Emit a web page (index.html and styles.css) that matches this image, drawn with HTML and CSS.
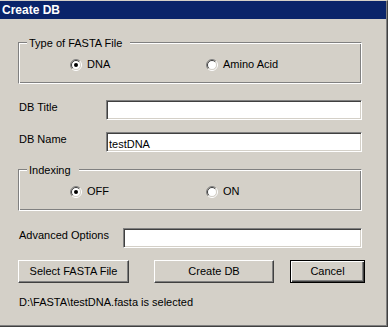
FILE: index.html
```html
<!DOCTYPE html>
<html lang="en">

<head>
    <meta charset="UTF-8">
    <title>Create DB</title>
    <link rel="stylesheet" href="styles.css">
</head>

<body>
    <div class="window">
        <div class="titlebar">Create DB</div>
        <div class="content">
            <!-- FASTA type -->
            <div class="group">
                <span class="legend">Type of FASTA File</span>
                <div class="options">
                    <label class="option">
                        <svg class="radio" width="12" height="12" viewBox="0 0 12 12">
                            <circle cx="6" cy="6" r="4.5" fill="#fff"/>
                            <path d="M2.1 9.9A5.5 5.5 0 0 1 9.9 2.1" stroke="#808080" fill="none"/>
                            <path d="M2.8 9.2A4.5 4.5 0 0 1 9.2 2.8" stroke="#404040" fill="none"/>
                            <path d="M9.9 2.1A5.5 5.5 0 0 1 2.1 9.9" stroke="#fff" fill="none"/>
                            <path d="M9.2 2.8A4.5 4.5 0 0 1 2.8 9.2" stroke="#d4d0c8" fill="none"/>
                            <circle cx="6" cy="6" r="2" fill="#000"/>
                        </svg>DNA
                    </label>
                    <label class="option">
                        <svg class="radio" width="12" height="12" viewBox="0 0 12 12">
                            <circle cx="6" cy="6" r="4.5" fill="#fff"/>
                            <path d="M2.1 9.9A5.5 5.5 0 0 1 9.9 2.1" stroke="#808080" fill="none"/>
                            <path d="M2.8 9.2A4.5 4.5 0 0 1 9.2 2.8" stroke="#404040" fill="none"/>
                            <path d="M9.9 2.1A5.5 5.5 0 0 1 2.1 9.9" stroke="#fff" fill="none"/>
                            <path d="M9.2 2.8A4.5 4.5 0 0 1 2.8 9.2" stroke="#d4d0c8" fill="none"/>
                        </svg>Amino Acid
                    </label>
                </div>
            </div>

            <div class="field field-first">
                <span class="field-label">DB Title</span>
                <div class="edit"></div>
            </div>

            <div class="field">
                <span class="field-label">DB Name</span>
                <div class="edit">testDNA</div>
            </div>

            <!-- Indexing -->
            <div class="group group-indexing">
                <span class="legend">Indexing</span>
                <div class="options">
                    <label class="option">
                        <svg class="radio" width="12" height="12" viewBox="0 0 12 12">
                            <circle cx="6" cy="6" r="4.5" fill="#fff"/>
                            <path d="M2.1 9.9A5.5 5.5 0 0 1 9.9 2.1" stroke="#808080" fill="none"/>
                            <path d="M2.8 9.2A4.5 4.5 0 0 1 9.2 2.8" stroke="#404040" fill="none"/>
                            <path d="M9.9 2.1A5.5 5.5 0 0 1 2.1 9.9" stroke="#fff" fill="none"/>
                            <path d="M9.2 2.8A4.5 4.5 0 0 1 2.8 9.2" stroke="#d4d0c8" fill="none"/>
                            <circle cx="6" cy="6" r="2" fill="#000"/>
                        </svg>OFF
                    </label>
                    <label class="option">
                        <svg class="radio" width="12" height="12" viewBox="0 0 12 12">
                            <circle cx="6" cy="6" r="4.5" fill="#fff"/>
                            <path d="M2.1 9.9A5.5 5.5 0 0 1 9.9 2.1" stroke="#808080" fill="none"/>
                            <path d="M2.8 9.2A4.5 4.5 0 0 1 9.2 2.8" stroke="#404040" fill="none"/>
                            <path d="M9.9 2.1A5.5 5.5 0 0 1 2.1 9.9" stroke="#fff" fill="none"/>
                            <path d="M9.2 2.8A4.5 4.5 0 0 1 2.8 9.2" stroke="#d4d0c8" fill="none"/>
                        </svg>ON
                    </label>
                </div>
            </div>

            <div class="field field-advanced">
                <span class="field-label">Advanced Options</span>
                <div class="edit"></div>
            </div>

            <div class="buttons">
                <button class="btn btn-select">Select FASTA File</button>
                <button class="btn btn-create">Create DB</button>
                <button class="btn btn-cancel btn-default">Cancel</button>
            </div>

            <div class="status">D:\FASTA\testDNA.fasta is selected</div>
        </div>
    </div>
</body>

</html>
```

FILE: styles.css
```css
body {
    margin: 0;
    background: #ffffff;
    font-family: "Liberation Sans", Arial, sans-serif;
    font-size: 11px;
    color: #000;
}

.window {
    width: 388px;
    height: 327px;
    box-sizing: border-box;
    background: #d4d0c8;
    border-top: 1px solid #d4d0c8;
    border-right: 1px solid #404040;
    border-bottom: 1px solid #404040;
    box-shadow: inset -1px -1px 0 #808080;
}

.titlebar {
    height: 18px;
    margin-right: 1px;
    padding-left: 2px;
    background: #0a246a;
    color: #fff;
    font-size: 12px;
    font-weight: bold;
    line-height: 18px;
}

.content {
    padding: 23px 25px 0 18px;
}

/* etched group box */
.group {
    position: relative;
    height: 42px;
    box-sizing: border-box;
    border: 1px solid;
    border-color: #808080 #fff #fff #808080;
    box-shadow: inset 1px 1px 0 #fff, inset -1px -1px 0 #808080;
    padding: 15px 0 0 51px;
}

.group-indexing {
    margin-top: 17px;
}

.legend {
    position: absolute;
    top: -6px;
    left: 8px;
    padding: 0 8px 0 2px;
    background: #d4d0c8;
    line-height: 13px;
}

.options {
    display: flex;
}

.option {
    display: flex;
    align-items: center;
    width: 136px;
    line-height: 13px;
}

.radio {
    flex: none;
    margin-right: 5px;
}

.field {
    display: flex;
    align-items: flex-start;
    margin-top: 12px;
}

.field-first {
    margin-top: 16px;
}

.field-advanced {
    margin-top: 17px;
}

.field-label {
    width: 88px;
    flex: none;
    box-sizing: border-box;
    padding-left: 1px;
    margin-top: 1px;
    line-height: 13px;
}

.field-advanced .field-label {
    width: 105px;
}

.edit {
    flex: 1;
    height: 20px;
    box-sizing: border-box;
    padding: 5px 1px 0 2px;
    background: #fff;
    border: 1px solid;
    border-color: #808080 #fff #fff #808080;
    box-shadow: inset 1px 1px 0 #404040, inset -1px -1px 0 #d4d0c8;
    line-height: 12px;
    overflow: hidden;
}

.buttons {
    display: flex;
    margin-top: 12px;
}

.btn {
    flex: none;
    height: 23px;
    box-sizing: border-box;
    padding: 0 0 2px;
    background: #d4d0c8;
    border: 1px solid;
    border-color: #fff #404040 #404040 #fff;
    box-shadow: inset -1px -1px 0 #808080;
    font: inherit;
    color: #000;
    text-align: center;
}

.btn-select {
    width: 111px;
}

.btn-create {
    width: 120px;
    margin-left: 25px;
}

.btn-cancel {
    width: 75px;
    margin-left: 16px;
}

.btn-default {
    border-color: #000;
    box-shadow: inset 1px 1px 0 #fff, inset -1px -1px 0 #404040, inset -2px -2px 0 #808080;
}

.status {
    margin-top: 13px;
    padding-left: 1px;
    line-height: 13px;
}
```
